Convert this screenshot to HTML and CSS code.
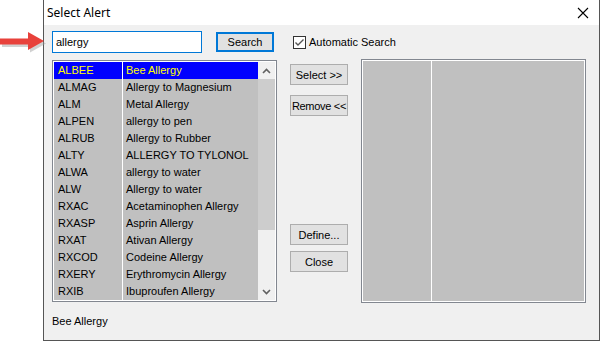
FILE: index.html
```html
<!DOCTYPE html>
<html lang="en">

<head>
    <meta charset="UTF-8">
    <title>Select Alert</title>
    <link rel="stylesheet" href="styles.css">
</head>

<body>
    <svg class="pointer" width="46" height="24" viewBox="0 0 46 24">
        <path d="M1 8.5 H29 V2 L45 11 L29 20 V14.5 H1 Z" fill="#9a9a9a" opacity="0.45" transform="translate(1,1.5)"/>
        <path d="M0 7.5 H28 V1 L44 10 L28 19 V13.5 H0 Z" fill="#e8413b"/>
    </svg>

    <div class="dialog">
        <div class="titlebar">
            <span class="title">Select Alert</span>
            <svg class="close" width="12" height="12" viewBox="0 0 12 12">
                <path d="M1 1 L11 11 M11 1 L1 11" stroke="#000" stroke-width="1.1"/>
            </svg>
        </div>

        <div class="client">
            <div class="toolbar">
                <input class="search-box" type="text" value="allergy">
                <button class="btn btn-default">Search</button>
                <label class="check">
                    <svg class="check-box" width="13" height="13" viewBox="0 0 13 13">
                        <rect x="0.5" y="0.5" width="12" height="12" fill="#fff" stroke="#333"/>
                        <path d="M2.5 6.5 L5 9 L10.5 3.5" fill="none" stroke="#555" stroke-width="1.4"/>
                    </svg>
                    Automatic Search
                </label>
            </div>

            <div class="main">
                <div class="list">
                    <div class="rows">
                        <div class="cell selected">ALBEE</div><div class="cell selected">Bee Allergy</div>
                        <div class="cell">ALMAG</div><div class="cell">Allergy to Magnesium</div>
                        <div class="cell">ALM</div><div class="cell">Metal Allergy</div>
                        <div class="cell">ALPEN</div><div class="cell">allergy to pen</div>
                        <div class="cell">ALRUB</div><div class="cell">Allergy to Rubber</div>
                        <div class="cell">ALTY</div><div class="cell">ALLERGY TO TYLONOL</div>
                        <div class="cell">ALWA</div><div class="cell">allergy to water</div>
                        <div class="cell">ALW</div><div class="cell">Allergy to water</div>
                        <div class="cell">RXAC</div><div class="cell">Acetaminophen Allergy</div>
                        <div class="cell">RXASP</div><div class="cell">Asprin Allergy</div>
                        <div class="cell">RXAT</div><div class="cell">Ativan Allergy</div>
                        <div class="cell">RXCOD</div><div class="cell">Codeine Allergy</div>
                        <div class="cell">RXERY</div><div class="cell">Erythromycin Allergy</div>
                        <div class="cell">RXIB</div><div class="cell">Ibuproufen Allergy</div>
                    </div>
                    <div class="scrollbar">
                        <div class="arrow">
                            <svg width="9" height="6" viewBox="0 0 9 6"><path d="M1 5 L4.5 1.5 L8 5" fill="none" stroke="#606060" stroke-width="1.6"/></svg>
                        </div>
                        <div class="thumb"></div>
                        <div class="track"></div>
                        <div class="arrow">
                            <svg width="9" height="6" viewBox="0 0 9 6"><path d="M1 1 L4.5 4.5 L8 1" fill="none" stroke="#606060" stroke-width="1.6"/></svg>
                        </div>
                    </div>
                </div>

                <div class="actions">
                    <button class="btn btn-select">Select &gt;&gt;</button>
                    <button class="btn btn-remove">Remove &lt;&lt;</button>
                    <button class="btn btn-define">Define...</button>
                    <button class="btn btn-close">Close</button>
                </div>

                <div class="chosen">
                    <div class="chosen-col"></div>
                    <div class="chosen-col"></div>
                </div>
            </div>

            <div class="status">Bee Allergy</div>
        </div>
    </div>
</body>

</html>
```

FILE: styles.css
```css
body {
    margin: 0;
    padding: 0 0 0 43px;
    width: 600px;
    height: 341px;
    box-sizing: border-box;
    background: #ffffff;
    font-family: "Liberation Sans", Arial, sans-serif;
    font-size: 11px;
    color: #000;
    overflow: hidden;
}

.pointer {
    position: absolute;
    left: 0;
    top: 31px;
}

.dialog {
    width: 557px;
    height: 341px;
    box-sizing: border-box;
    border: 1px solid #555555;
    border-top: none;
    display: flex;
    flex-direction: column;
}

.titlebar {
    height: 25px;
    background: #ffffff;
    display: flex;
    align-items: center;
    justify-content: space-between;
    padding: 0 10px 0 3px;
}

.title {
    font-size: 12px;
    font-family: "Noto Sans", "Liberation Sans", sans-serif;
    margin-top: -1px;
}

.client {
    flex: 1;
    background: #f0f0f0;
}

.toolbar {
    display: flex;
    align-items: center;
    padding: 6px 0 0 8px;
}

.search-box {
    width: 150px;
    height: 22px;
    box-sizing: border-box;
    border: 1px solid #0078d7;
    padding: 0 3px;
    margin: 0;
    font-family: inherit;
    font-size: 11px;
    outline: none;
}

.btn {
    display: block;
    width: 58px;
    height: 21px;
    box-sizing: border-box;
    margin: 0;
    padding: 0;
    background: #e1e1e1;
    border: 1px solid #adadad;
    font-family: inherit;
    font-size: 11px;
    color: #000;
    white-space: nowrap;
}

.btn-default {
    height: 20px;
    margin-left: 14px;
    border: 2px solid #0078d7;
}

.check {
    display: flex;
    align-items: center;
    margin-left: 19px;
    gap: 3px;
}

.main {
    display: flex;
    align-items: flex-start;
    margin-top: 6px;
    padding-left: 8px;
}

.list {
    display: flex;
    width: 225px;
    margin-top: 1px;
    box-sizing: border-box;
    border: 1px solid #828790;
    padding: 1px;
    background: #ffffff;
}

.rows {
    display: grid;
    grid-template-columns: 68px 135px;
    column-gap: 1px;
    grid-auto-rows: 17px;
    background: #ffffff;
}

.cell {
    background: #c0c0c0;
    line-height: 17px;
    padding-left: 4px;
    white-space: nowrap;
}

.cell:nth-child(even) {
    padding-left: 3px;
}

.cell.selected {
    background: #0000ff;
    color: #ffff00;
}

.scrollbar {
    width: 17px;
    height: 238px;
    display: flex;
    flex-direction: column;
    background: #f0f0f0;
}

.scrollbar .arrow {
    height: 17px;
    display: flex;
    align-items: center;
    justify-content: center;
}

.thumb {
    height: 151px;
    background: #cdcdcd;
}

.track {
    flex: 1;
}

.actions {
    display: flex;
    flex-direction: column;
    margin-left: 13px;
}

.btn-select {
    margin-top: 5px;
}

.btn-remove {
    margin-top: 10px;
    letter-spacing: -0.3px;
}

.btn-define {
    margin-top: 108px;
}

.btn-close {
    margin-top: 6px;
}

.chosen {
    display: flex;
    gap: 1px;
    width: 225px;
    height: 244px;
    margin-left: 13px;
    box-sizing: border-box;
    border: 1px solid #828790;
    padding: 1px;
    background: #ffffff;
}

.chosen-col {
    background: #c0c0c0;
    width: 68px;
}

.chosen-col + .chosen-col {
    flex: 1;
}

.status {
    padding-left: 8px;
    margin-top: 12px;
    line-height: 13px;
}
```
